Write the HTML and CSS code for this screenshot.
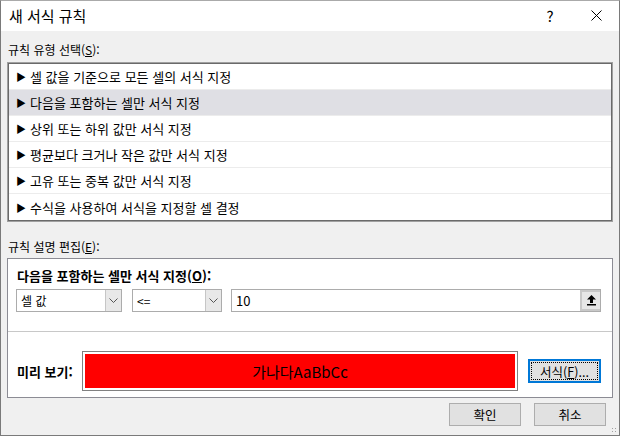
FILE: index.html
```html
<!DOCTYPE html>
<html lang="ko">
<head>
  <meta charset="UTF-8">
  <title>새 서식 규칙</title>
  <link rel="stylesheet" href="styles.css">
</head>
<body>
  <div class="dialog">
    <div class="titlebar">
      <span class="title">새 서식 규칙</span>
      <div class="caption-buttons">
        <span class="caption-btn">?</span>
        <span class="caption-btn">
          <svg width="11" height="11" viewBox="0 0 11 11"><path d="M0.5 0.5 L10.5 10.5 M10.5 0.5 L0.5 10.5" stroke="#000" stroke-width="1" fill="none"/></svg>
        </span>
      </div>
    </div>

    <div class="content">
      <div class="group-label">규칙 유형 선택(<u>S</u>):</div>
      <ul class="rule-list">
        <li class="rule"><span class="arrow">▶</span>셀 값을 기준으로 모든 셀의 서식 지정</li>
        <li class="rule selected"><span class="arrow">▶</span>다음을 포함하는 셀만 서식 지정</li>
        <li class="rule"><span class="arrow">▶</span>상위 또는 하위 값만 서식 지정</li>
        <li class="rule"><span class="arrow">▶</span>평균보다 크거나 작은 값만 서식 지정</li>
        <li class="rule"><span class="arrow">▶</span>고유 또는 중복 값만 서식 지정</li>
        <li class="rule"><span class="arrow">▶</span>수식을 사용하여 서식을 지정할 셀 결정</li>
      </ul>

      <div class="group-label second">규칙 설명 편집(<u>E</u>):</div>
      <div class="edit-panel">
        <div class="section-title">다음을 포함하는 셀만 서식 지정(<u>O</u>):</div>
        <div class="cond-row">
          <div class="combo combo-wide">
            <span class="combo-text">셀 값</span>
            <span class="combo-drop">
              <svg width="9" height="5" viewBox="0 0 9 5"><path d="M0.5 0.5 L4.5 4.5 L8.5 0.5" stroke="#555" fill="none"/></svg>
            </span>
          </div>
          <div class="combo combo-narrow">
            <span class="combo-text">&lt;=</span>
            <span class="combo-drop">
              <svg width="9" height="5" viewBox="0 0 9 5"><path d="M0.5 0.5 L4.5 4.5 L8.5 0.5" stroke="#555" fill="none"/></svg>
            </span>
          </div>
          <div class="value-box">
            <span class="value-text">10</span>
            <span class="ref-btn">
              <svg width="9" height="11" viewBox="0 0 9 11"><path d="M4.5 0 L9 4.5 L6 4.5 L6 8 L3 8 L3 4.5 L0 4.5 Z" fill="#000"/><rect x="0" y="9" width="9" height="1.5" fill="#000"/></svg>
            </span>
          </div>
        </div>
        <div class="divider"></div>
        <div class="preview-row">
          <span class="preview-label">미리 보기:</span>
          <div class="preview-box">
            <div class="preview-fill">가나다AaBbCc</div>
          </div>
          <button class="btn btn-focus">서식(<u>F</u>)...</button>
        </div>
      </div>

      <div class="footer">
        <button class="btn">확인</button>
        <button class="btn">취소</button>
      </div>
    </div>
    <span class="grip"></span>
  </div>
</body>
</html>
```

FILE: styles.css
```css
body {
  margin: 0;
  font-family: "Noto Sans CJK KR", "Noto Sans", sans-serif;
  font-size: 12px;
  color: #000;
}
.dialog {
  position: relative;
  width: 620px;
  height: 436px;
  box-sizing: border-box;
  background-color: #f0f0f0;
  border: 1px solid #7a7a7a;
  border-top-color: #aaaaaa;
}
.titlebar {
  height: 30px;
  background-color: #fff;
  display: flex;
  align-items: center;
  justify-content: space-between;
}
.title {
  font-size: 15px;
  padding-left: 8px;
  padding-bottom: 2px;
}
.caption-buttons {
  display: flex;
  height: 100%;
}
.caption-btn {
  width: 46px;
  display: flex;
  align-items: center;
  justify-content: center;
  font-size: 15px;
  padding-bottom: 2px;
}
.content {
  padding: 0 6px;
}
.group-label {
  line-height: 16px;
  margin-top: 11px;
  padding-left: 1px;
}
.group-label.second {
  margin-top: 17px;
}
.rule-list {
  list-style: none;
  margin: 4px 0 0;
  background-color: #fff;
  border: 1px solid #a0a0a0;
  box-shadow: inset 0 0 0 1px #6a6a6a;
  padding: 1px;
}
.rule {
  height: 26px;
  box-sizing: border-box;
  display: flex;
  align-items: center;
  padding-left: 7px;
  border-bottom: 1px solid #ececec;
  font-size: 13px;
}
.rule:last-child {
  border-bottom: none;
}
.rule.selected {
  background-color: #dfdfe4;
}
.arrow {
  font-size: 10px;
  width: 14px;
}
.edit-panel {
  margin-top: 3px;
  background-color: #fff;
  border: 1px solid #8c8c94;
  padding: 9px 0 6px;
}
.section-title {
  font-weight: bold;
  line-height: 16px;
  padding-left: 9px;
  font-size: 13px;
}
.cond-row {
  display: flex;
  gap: 10px;
  margin-top: 5px;
  padding-left: 8px;
}
.combo {
  height: 23px;
  box-sizing: border-box;
  border: 1px solid #acacac;
  display: flex;
  align-items: center;
  justify-content: space-between;
}
.combo-wide {
  width: 106px;
}
.combo-narrow {
  width: 90px;
}
.combo-text {
  padding-left: 4px;
}
.combo-drop {
  width: 16px;
  height: 100%;
  box-sizing: border-box;
  background-color: #e8e8e8;
  border-left: 1px solid #c6c6c6;
  display: flex;
  align-items: center;
  justify-content: center;
}
.value-box {
  width: 370px;
  height: 23px;
  box-sizing: border-box;
  border: 1px solid #acacac;
  display: flex;
  align-items: center;
  justify-content: space-between;
  margin-left: -1px;
}
.value-text {
  padding-left: 4px;
  font-size: 13px;
}
.ref-btn {
  width: 20px;
  height: 100%;
  box-sizing: border-box;
  background-color: #e6e6e6;
  border: 2px solid #c8c8c8;
  border-right: none;
  display: flex;
  align-items: center;
  justify-content: center;
}
.divider {
  height: 1px;
  background-color: #c8c8c8;
  margin-top: 19px;
}
.preview-row {
  display: flex;
  align-items: center;
  margin-top: 19px;
  padding-left: 9px;
}
.preview-label {
  font-weight: bold;
  width: 65px;
  font-size: 13px;
}
.preview-box {
  width: 436px;
  height: 40px;
  box-sizing: border-box;
  border: 1px solid #808080;
  padding: 2px;
  background-color: #fff;
}
.preview-fill {
  height: 100%;
  background-color: #ff0000;
  display: flex;
  align-items: center;
  justify-content: center;
  font-size: 15px;
}
.btn {
  font-family: inherit;
  font-size: 12.5px;
  color: #000;
  background-color: #e1e1e1;
  border: 1px solid #adadad;
  width: 72px;
  height: 23px;
  padding: 0;
}
.btn-focus {
  margin-left: 10px;
  width: 73px;
  height: 24px;
  border: 2px solid #0078d7;
  outline: 1px dotted #000;
  outline-offset: -4px;
}
.footer {
  display: flex;
  justify-content: flex-end;
  gap: 13px;
  margin-top: 5px;
  padding-right: 7px;
}
.grip {
  position: absolute;
  right: 1px;
  bottom: 1px;
  width: 7px;
  height: 7px;
  background-image: radial-gradient(circle, #a0a0a0 0.8px, transparent 1px);
  background-size: 3px 3px;
}
```
